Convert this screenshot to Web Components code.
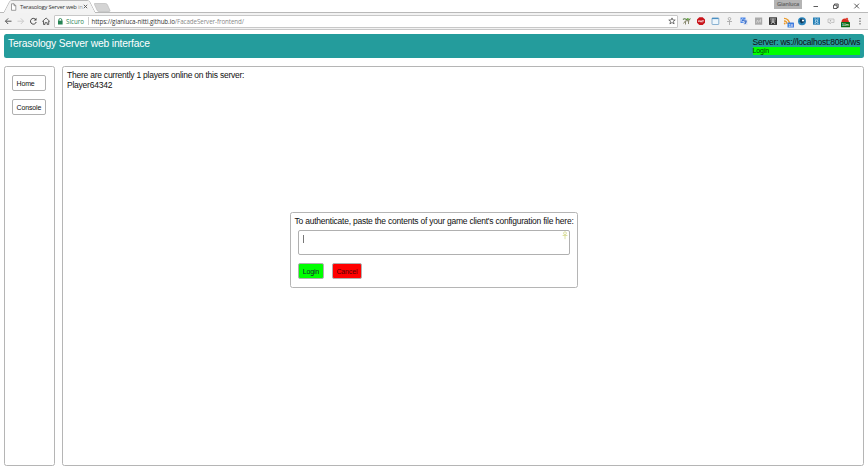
<!DOCTYPE html>
<html lang="en">
<head>
<meta charset="utf-8">
<title>Terasology Server web interface</title>
<style>
html, body { margin: 0; height: 100%; overflow: hidden; background: #fff; }
body { font-family: "Liberation Sans", Arial, sans-serif; font-size: 8.500px; letter-spacing: -.235px; color: #111; }
</style>
</head>
<body>
<app-window></app-window>
<script>
function define(name, html) {
  const t = document.createElement('template');
  t.innerHTML = html;
  customElements.define(name, class extends HTMLElement {
    constructor() {
      super();
      this.attachShadow({ mode: 'open' }).appendChild(t.content.cloneNode(true));
    }
  });
}

define('browser-tabs', `
<style>
:host { display: flex; height: 13px; position: relative; box-sizing: border-box; font: 5.9px "Open Sans", sans-serif; letter-spacing: 0; color: #333; }
.shape { position: absolute; left: 0; top: 0; }
.tab { position: relative; display: flex; align-items: center; width: 80px; padding-left: 10px; height: 13px; }
.title { width: 60px; margin-left: 3px; white-space: nowrap; letter-spacing: -.25px; line-height: 10px; }
.fade { color: #999; }
.close { flex: none; margin-left: 3px; }
.controls { position: relative; margin-left: auto; display: flex; align-items: flex-start; }
.user { width: 28px; height: 9px; box-sizing: border-box; background: #b4b4b4; color: #777; text-align: center; line-height: 8px; font-size: 5.5px; text-shadow: .3px 0 #555; }
</style>
<svg class="shape" width="868" height="13">
  <path d="M0 12.5H4L9.5 2Q10 .5 12 .5H87Q89 .5 89.7 2L95 12.5H868" fill="none" stroke="#b9b9b9"/>
  <path d="M4 13L10 2Q10.500 1 12 1H87Q89 1 89.500 2L95 13Z" fill="#f3f3f3"/>
  <path d="M94.500 3.500H105.500Q107 3.500 107.500 5L110 10.500Q110.300 11.500 109 11.500H99Q97.500 11.500 97 10L94.500 4.500Z" fill="#d4d4d4" stroke="#bcbcbc" stroke-width=".7"/>
</svg>
<div class="tab">
  <svg width="7" height="8" viewBox="0 0 7 8" style="flex:none"><path d="M1.500 .8H4L5.800 2.700V7.300H1.500ZM4 .8V2.700H5.800" fill="#fff" stroke="#777" stroke-width=".7"/></svg>
  <div class="title">Terasology Server web <span class="fade">in</span></div>
  <svg class="close" width="5" height="5" viewBox="0 0 5 5"><path d="M.8 .8L4.200 4.200M4.200 .8L.8 4.200" stroke="#555" stroke-width=".9"/></svg>
</div>
<div class="controls">
  <div class="user">Gianluca</div>
  <svg width="66" height="13" viewBox="802 0 66 13"><g fill="none" stroke="#333" stroke-width=".8"><path d="M813.500 6.500H818"/><path d="M833.500 5.200H837V8.500H833.500ZM834.500 5V4H838.200V7.500H837"/><path d="M854.300 3.700L859 8.400M859 3.700L854.300 8.400"/></g></svg>
</div>`);

define('browser-toolbar', `
<style>
:host { display: flex; align-items: center; height: 17px; box-sizing: border-box; background: #f2f2f2; border-bottom: 1px solid #c6c6c6; font: 6.2px "Open Sans", sans-serif; color: #333; }
svg { flex: none; display: block; }
.address { flex: none; width: 624px; height: 13px; box-sizing: border-box; border: 1px solid #c8c8c8; border-radius: 1px; background: #fff; display: flex; align-items: center; white-space: nowrap; }
.secure { color: #268454; width: 21.500px; margin-left: 2px; letter-spacing: 0; }
.url { margin-left: 3px; letter-spacing: -.065px; }
.path { color: #888; }
.star { margin-left: auto; margin-right: 1.500px; }
</style>
<svg width="54" height="16" viewBox="0 13 54 16"><g fill="none" stroke-width="1">
  <path d="M11.500 21.200H5.500M8.200 18.400L5.400 21.200L8.200 24" stroke="#555"/>
  <path d="M17.500 21.200H23.500M20.800 18.400L23.600 21.200L20.800 24" stroke="#ccc"/>
  <path d="M35.600 19.400A2.900 2.900 0 1 0 36.200 22" stroke="#444"/><path d="M36.500 17.800V20.600H33.700Z" fill="#444"/>
  <path d="M42.300 21.500L46.100 18L49.900 21.500M43.500 21V24.500H45V22.700H47.200V24.500H48.700V21" stroke="#555" stroke-width=".9"/>
</g></svg>
<div class="address">
  <svg width="9" height="9" viewBox="0 0 9 9"><path d="M3.800 4V3A1.500 1.500 0 0 1 6.800 3V4" fill="none" stroke="#268454" stroke-width=".9"/><rect x="3" y="3.700" width="4.600" height="3.800" fill="#268454"/></svg>
  <span class="secure">Sicuro</span>
  <svg width="1" height="8"><path d="M.5 0V8" stroke="#ccc"/></svg>
  <span class="url">https://gianluca-nitti.github.io<span class="path">/FacadeServer-frontend/</span></span>
  <svg class="star" width="8" height="8" viewBox="0 0 8 8"><path d="M4 .9L4.900 3H7.200L5.400 4.500L6.100 6.900L4 5.500L1.900 6.900L2.600 4.500L.8 3H3.100Z" fill="none" stroke="#555" stroke-width=".8"/></svg>
</div>
<svg width="190" height="16" viewBox="678 13 190 16">
  <path d="M683 19.500Q684.500 18 686.500 19.500T690.500 18.500" fill="none" stroke="#5a7a45" stroke-width="1.100"/><path d="M683.500 23.500L685.500 20.800H689.500M685.500 21V24.500M688.500 21V24" stroke="#8a8a70" stroke-width="1" fill="none"/><circle cx="687.800" cy="19" r="1.100" fill="#68ad48"/>
  <path d="M699.300 17.300H702.700L705 19.600V22.800L702.700 25H699.300L697 22.800V19.600Z" fill="#c9151c"/><path d="M698.500 22V20.700H699.700V22M700.500 20.500V22H701.500V20.500M702.300 22.400V20.500H703.500V21.500" fill="none" stroke="#fff" stroke-width=".6"/>
  <rect x="712" y="18" width="6.800" height="6.500" rx=".5" fill="#edf6fc" stroke="#6fa0c7" stroke-width=".8"/><path d="M712 18.500H718.500" stroke="#4a8fc2" stroke-width="1.200"/>
  <g fill="none" stroke="#aaa" stroke-width=".9"><circle cx="729.500" cy="18.800" r="1.300"/><path d="M729.500 20V25M727 21.500H732"/></g>
  <rect x="740.500" y="17.500" width="5" height="5.500" fill="#4a86e8"/><rect x="743.500" y="19.500" width="4" height="5.300" fill="#d4deef"/><path d="M742 20.300H744.500M743.800 21H746.800M745.300 20.500V24M744.500 23.700L747 21.500" stroke="#2b62c4" stroke-width=".8"/><path d="M743.200 18.900A1.500 1.500 0 1 0 744 21" fill="none" stroke="#fff" stroke-width=".6"/>
  <rect x="755" y="17.500" width="7.200" height="7.200" fill="#aaa"/><path d="M756.500 22.800L757.500 20L758.600 22.500L760.500 19.500V22.500" fill="none" stroke="#ddd" stroke-width=".7"/>
  <rect x="769" y="17.300" width="8" height="7.600" fill="#333"/><path d="M770 19H776M770.500 21H775.500M773 18.500V23M771 24L772.300 22H773.700L775 24" fill="none" stroke="#ddd" stroke-width=".8"/>
  <g fill="none" stroke="#e99a2c" stroke-width="1.300"><path d="M784 18.300A5.500 5.500 0 0 1 789.500 24"/><path d="M784 21A2.800 2.800 0 0 1 787 24"/></g><circle cx="784.700" cy="23.500" r=".9" fill="#e99a2c"/><rect x="787.500" y="22.500" width="6.500" height="5" rx=".6" fill="#3b7de0"/><text x="788.300" y="26.800" font-family="Liberation Sans" font-size="4.300" fill="#fff">18</text>
  <circle cx="802" cy="21.200" r="4" fill="#2b86be"/><path d="M800.500 18.500L804 19L804.500 22L801.500 23.500L799.500 21.500Z" fill="#123d5d"/><circle cx="803" cy="20.500" r="1.100" fill="#fff"/>
  <rect x="813" y="17.500" width="7" height="7.200" fill="#247eb5"/><path d="M814.500 19H816M817.200 19H818.700M814.500 23.300H816M817.200 23.300H818.700" stroke="#c3e3f5" stroke-width=".8"/><circle cx="816.600" cy="21.200" r="1.300" fill="none" stroke="#d5edfa" stroke-width=".8"/>
  <path d="M828 19H834V22.500H831.500L830 24V22.500H828Z" fill="#eee" stroke="#bbb" stroke-width=".8"/><circle cx="830.500" cy="20.700" r=".7" fill="#aaa"/>
  <path d="M841.500 22Q841.500 18.500 845 18.500T849 22Z" fill="#d62d20"/><circle cx="847" cy="19" r="1.200" fill="#e0483b"/><rect x="841" y="22" width="9" height="5.200" rx=".5" fill="#086a16"/><text x="841.700" y="26.200" font-family="Liberation Sans" font-size="4" fill="#fff">10m</text>
  <g fill="#555"><rect x="859.400" y="18" width="1.200" height="1.200"/><rect x="859.400" y="20.600" width="1.200" height="1.200"/><rect x="859.400" y="23.200" width="1.200" height="1.200"/></g>
</svg>`);

define('site-header', `
<style>
:host { display: flex; justify-content: space-between; box-sizing: border-box; height: 24px; padding: 4px; border-radius: 2.500px; background: #249c9c; }
.title { color: #fff; font-size: 10.300px; letter-spacing: -.17px; line-height: 12px; white-space: nowrap; }
.server { width: 107.500px; white-space: nowrap; line-height: 9px; letter-spacing: -.235px; }
.login { background: #0f0; font-size: 7px; line-height: 8px; height: 8px; color: #064006; letter-spacing: -.1px; }
</style>
<div class="title">Terasology Server web interface</div>
<div class="server">Server: ws://localhost:8080/ws<div class="login">Login</div></div>`);

define('bordered-panel', `
<style>:host { display: block; box-sizing: border-box; border: 1px solid #b5b5b5; border-radius: 2.500px; background: #fff; }</style>
<slot></slot>`);

define('app-button', `
<style>
:host { display: flex; align-items: center; justify-content: center; box-sizing: border-box; height: 16px; border: 1px solid #b0b0b0; border-radius: 2px; font-size: 7px; letter-spacing: -.15px; background: var(--fill, #fff); white-space: nowrap; }
</style>
<slot></slot>`);

define('login-dialog', `
<style>
:host { position: absolute; left: 290px; top: 212px; width: 288px; height: 76px; }
bordered-panel { height: 76px; padding: 3px 3.500px; }
.prompt { line-height: 10px; white-space: nowrap; letter-spacing: -.23px; }
.input { margin: 4px 3.500px 0; height: 25px; box-sizing: border-box; border: 1px solid #b0b0b0; border-radius: 2px; display: flex; justify-content: space-between; padding: 0 1.500px 0 4px; }
.caret { width: 1px; height: 8px; margin-top: 4px; background: #777; }
.actions { display: flex; gap: 8px; margin: 8px 3.400px 0; }
app-button { color: #123; }
.ok { width: 26px; --fill: #0f0; }
.cancel { width: 30px; --fill: #f00; color: #500; }
</style>
<bordered-panel>
  <div class="prompt">To authenticate, paste the contents of your game client's configuration file here:</div>
  <div class="input"><div class="caret"></div>
    <svg width="6" height="9" viewBox="0 0 6 9"><g fill="none" stroke="#dce0a0" stroke-width="1"><circle cx="3" cy="2.200" r="1.400"/><path d="M3 3.500V8.200M.6 4.500H5.400"/></g></svg>
  </div>
  <div class="actions"><app-button class="ok">Login</app-button><app-button class="cancel">Cancel</app-button></div>
</bordered-panel>`);

define('app-window', `
<style>
:host { display: flex; flex-direction: column; height: 470px; position: relative; }
site-header { margin: 4px 4px 8px; }
.columns { flex: 1; display: grid; grid-template-columns: 50.500px 1fr; gap: 7.500px; padding: 0 4px 4px; }
.side { padding: 8px 7px; display: flex; flex-direction: column; gap: 8px; }
.side app-button { width: 34px; justify-content: flex-start; padding-left: 3.500px; }
.main { padding: 3px 4px; line-height: 10px; }
</style>
<browser-tabs></browser-tabs>
<browser-toolbar></browser-toolbar>
<site-header></site-header>
<div class="columns">
  <bordered-panel class="side"><app-button>Home</app-button><app-button>Console</app-button></bordered-panel>
  <bordered-panel class="main">There are currently 1 players online on this server:<br>Player64342</bordered-panel>
</div>
<login-dialog></login-dialog>`);
</script>
</body>
</html>
